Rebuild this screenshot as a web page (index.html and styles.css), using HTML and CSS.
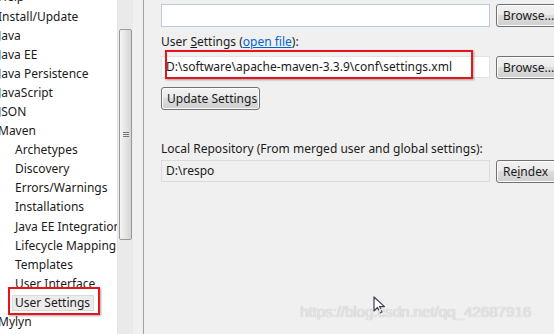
FILE: index.html
```html
<!DOCTYPE html>
<html>
<head>
<meta charset="utf-8">
<link rel="stylesheet" href="styles.css">
</head>
<body>
<div class="window">
  <div class="tree">
    <div class="rows">
      <div class="row top">Help</div>
      <div class="row top">Install/Update</div>
      <div class="row top">Java</div>
      <div class="row top">Java EE</div>
      <div class="row top">Java Persistence</div>
      <div class="row top">JavaScript</div>
      <div class="row top">JSON</div>
      <div class="row top">Maven</div>
      <div class="row child">Archetypes</div>
      <div class="row child">Discovery</div>
      <div class="row child">Errors/Warnings</div>
      <div class="row child">Installations</div>
      <div class="row child">Java EE Integration</div>
      <div class="row child">Lifecycle Mapping</div>
      <div class="row child">Templates</div>
      <div class="row child">User Interface</div>
      <div class="row child"><span class="selected">User Settings<span class="mark tree-mark"></span></span></div>
      <div class="row top">Mylyn</div>
    </div>
  </div>
  <div class="vscroll">
    <div class="thumb"><span class="grip"></span></div>
  </div>
  <div class="sash"></div>
  <div class="divider"></div>
  <div class="content">
    <div class="line-row first">
      <div class="field focused"></div>
      <button class="btn browse">Browse...</button>
    </div>
    <div class="label">User <u>S</u>ettings (<a class="link">open file</a>):</div>
    <div class="line-row">
      <div class="field">D:\software\apache-maven-3.3.9\conf\settings.xml<span class="mark field-mark"></span></div>
      <button class="btn browse">Browse...</button>
    </div>
    <button class="btn update">Update Settings</button>
    <div class="label repo">Local Repository (From merged user and global settings):</div>
    <div class="line-row">
      <div class="field readonly">D:\respo</div>
      <button class="btn browse">Re<u>i</u>ndex</button>
    </div>
    <div class="footer">
      <svg class="cursor" width="13" height="18" viewBox="0 0 13 18"><path d="M1 1 L1 15 L4.5 11.5 L7 17 L9 16 L6.6 10.6 L11.5 10.6 Z" fill="#fff" stroke="#3a3f52" stroke-width="1.2" stroke-linejoin="round"/></svg>
      <div class="watermark">https://blog.csdn.net/qq_42687916</div>
    </div>
  </div>
</div>
</body>
</html>
```
FILE: styles.css
```css
* { box-sizing: border-box; }
html, body { margin: 0; padding: 0; }
body {
  width: 554px;
  height: 334px;
  overflow: hidden;
  background: #f0f0f0;
  font-family: "Noto Sans", "Open Sans", sans-serif;
  font-size: 12px;
  color: #1b1b1b;
}
.window {
  display: grid;
  grid-template-columns: 117px 16px 10px 1px 1fr;
  height: 334px;
}
.tree {
  background: #fff;
  overflow: hidden;
}
.rows {
  margin-top: -12.6px;
  margin-left: -2px;
}
.row {
  height: 19.1px;
  line-height: 19.1px;
  white-space: nowrap;
}
.child { padding-left: 17px; }
.selected {
  position: relative;
  display: inline-block;
  background: #ececec;
  border: 1px solid #dadada;
  line-height: 14px;
  padding: 0 3px 0 2px;
  margin-left: -3px;
}
.mark {
  position: absolute;
  border: 2px solid #e8141c;
  box-shadow: 1px 1px 2px rgba(0,0,0,0.35);
  pointer-events: none;
}
.tree-mark {
  left: -5px;
  top: -9px;
  right: -7px;
  bottom: -5px;
}
.vscroll {
  background: #eaeaea;
  border-left: 1px solid #e4e4e4;
  position: relative;
}
.thumb {
  margin: 29px 1px 0 1px;
  height: 211px;
  border: 1px solid #9a9a9a;
  border-radius: 2px;
  background: linear-gradient(to right, #f4f4f4, #e2e2e2 60%, #d4d4d4);
  display: flex;
  align-items: center;
  justify-content: center;
}
.grip {
  width: 6px;
  height: 5px;
  border-top: 1px solid #777;
  border-bottom: 1px solid #777;
  position: relative;
}
.grip::after {
  content: "";
  position: absolute;
  left: 0; right: 0; top: 1px;
  border-top: 1px solid #777;
}
.sash { background: #f0f0f0; }
.divider { background: #a0a0a0; }
.content {
  padding-left: 17px;
  overflow: hidden;
  white-space: nowrap;
}
.line-row {
  display: grid;
  grid-template-columns: 329px 70px;
  column-gap: 6px;
  align-items: stretch;
}
.line-row.first { margin-top: 4px; height: 23px; }
.field {
  position: relative;
  background: #fff;
  border: 1px solid #e2e3ea;
  height: 22px;
  line-height: 20px;
  padding-left: 4px;
}
.field.focused { border-color: #b8cce4; height: 23px; }
.field.readonly { background: #f0f0f0; border-color: #dcdcdc; }
.field-mark {
  left: 3px;
  top: -7px;
  width: 308px;
  height: 29px;
}
.btn {
  font-family: inherit;
  font-size: 12px;
  color: #1b1b1b;
  border: 1px solid #707070;
  border-radius: 3px;
  background: linear-gradient(#f2f2f2, #ebebeb 45%, #dddddd 50%, #cfcfcf);
  box-shadow: inset 0 0 0 1px #fcfcfc;
  padding: 0 0 0 6px;
  text-align: left;
  height: 23px;
  line-height: 20px;
  margin: 0;
}
.label {
  margin-top: 5px;
  height: 24px;
  line-height: 20px;
}
.link { color: #0066cc; text-decoration: underline; }
.update {
  margin-top: 8px;
  width: 99px;
  height: 23px;
  padding-left: 5px;
}
.repo { margin-top: 28px; margin-bottom: 0; height: 22px; line-height: 22px; }
.footer {
  position: relative;
  height: 150px;
}
.cursor {
  position: absolute;
  left: 212px;
  top: 113px;
}
.watermark {
  position: absolute;
  left: 139px;
  top: 120px;
  font-family: "Liberation Sans", Arial, sans-serif;
  font-size: 15.5px;
  color: #e6e6e6;
  text-shadow: 0 0 1px #b5b5b5;
  letter-spacing: -0.2px;
}
```
